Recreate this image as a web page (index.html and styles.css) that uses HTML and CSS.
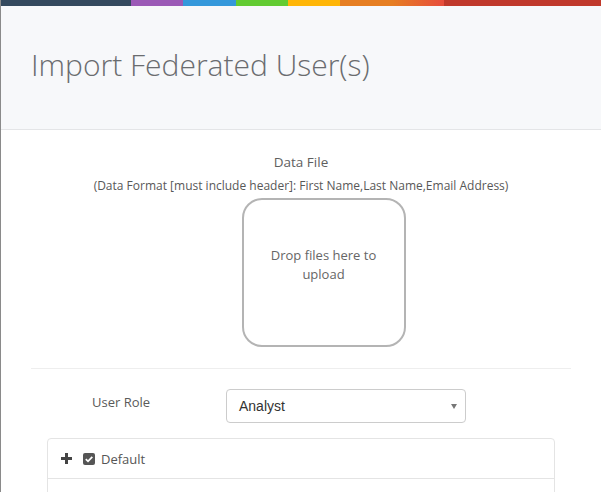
FILE: index.html
```html
<!DOCTYPE html>
<html>
<head>
<meta charset="utf-8">
<link rel="stylesheet" href="styles.css">
</head>
<body>
<div class="modal">
  <div class="stripe">
    <span class="s s1"></span><span class="s s2"></span><span class="s s3"></span><span class="s s4"></span><span class="s s5"></span><span class="s s6"></span><span class="s s7"></span>
  </div>
  <div class="header">
    <h1 class="title">Import Federated User(s)</h1>
  </div>
  <div class="body">
    <div class="field-label">Data File</div>
    <div class="format">(Data Format [must include header]: First Name,Last Name,Email Address)</div>
    <div class="drop-wrap">
      <div class="dropzone">Drop files here to upload</div>
    </div>
    <div class="divider"></div>
    <div class="role-row">
      <div class="role-label">User Role</div>
      <div class="select">
        <span class="select-value">Analyst</span>
        <span class="caret"></span>
      </div>
    </div>
    <div class="tree">
      <div class="tree-row">
        <svg class="plus" width="11" height="11" viewBox="0 0 11 11"><rect x="4" y="0" width="3" height="11" fill="#444"/><rect x="0" y="4" width="11" height="3" fill="#444"/></svg>
        <svg class="check" width="12" height="12" viewBox="0 0 12 12"><rect x="0" y="0" width="12" height="12" rx="2" fill="#555"/><path d="M2.8 6.2 L5 8.3 L9.3 3.8" fill="none" stroke="#fff" stroke-width="1.8"/></svg>
        <span class="tree-text">Default</span>
      </div>
      <div class="tree-row empty"></div>
    </div>
  </div>
</div>
</body>
</html>
```

FILE: styles.css
```css
html, body {
  margin: 0;
  padding: 0;
  background: #ffffff;
}
body {
  font-family: "Open Sans", "Liberation Sans", sans-serif;
  overflow: hidden;
}
.modal {
  width: 600px;
  height: 492px;
  border-left: 1px solid #8a8a8a;
  background: #ffffff;
  overflow: hidden;
}
.stripe {
  display: flex;
  height: 6px;
}
.s { display: block; height: 6px; }
.s1 { width: 130px; background: #34495e; }
.s2 { width: 52px; background: #9b59b6; }
.s3 { width: 53px; background: #3498db; }
.s4 { width: 52px; background: #62cb31; }
.s5 { width: 52px; background: #ffb606; }
.s6 { width: 104px; background: linear-gradient(to right, #e67e22 0%, #e67e22 50%, #e74c3c 100%); }
.s7 { flex: 1; background: #c0392b; }
.header {
  background: #f7f8fa;
  border-bottom: 1px solid #e4e5e7;
  padding: 39px 30px 44px 30px;
}
.title {
  margin: 0;
  font-weight: 300;
  font-size: 30px;
  line-height: 40px;
  color: #6a6c6f;
}
.body {
  padding: 23px 30px 0 30px;
}
.field-label {
  text-align: center;
  font-size: 13.5px;
  line-height: 18px;
  color: #5f5f5f;
}
.format {
  text-align: center;
  font-size: 12px;
  line-height: 17px;
  margin-top: 6px;
  color: #585858;
}
.drop-wrap {
  display: flex;
  justify-content: center;
  margin-top: 4px;
}
.dropzone {
  box-sizing: border-box;
  width: 164px;
  height: 149px;
  border: 2px solid #b4b4b4;
  border-radius: 20px;
  padding: 46px 16px 0 16px;
  text-align: center;
  font-size: 13px;
  line-height: 19px;
  color: #666;
  margin-left: 45px;
}
.divider {
  height: 1px;
  background: #eeeeee;
  margin-top: 21px;
}
.role-row {
  display: flex;
  align-items: center;
  margin-top: 20px;
}
.role-label {
  width: 195px;
  padding-left: 61px;
  box-sizing: border-box;
  font-size: 13px;
  color: #5a5a5a;
  margin-top: -9px;
}
.select {
  box-sizing: border-box;
  width: 240px;
  height: 34px;
  border: 1px solid #cccccc;
  border-radius: 4px;
  display: flex;
  align-items: center;
  justify-content: space-between;
  padding: 0 8px 0 12px;
}
.select-value {
  font-family: "Liberation Sans", Arial, sans-serif;
  font-size: 14px;
  color: #333;
}
.caret {
  width: 0;
  height: 0;
  border-left: 3px solid transparent;
  border-right: 3px solid transparent;
  border-top: 5px solid #777;
  margin-top: 1px;
}
.tree {
  margin: 15px 15px 0 16px;
  border: 1px solid #e4e4e4;
  border-radius: 4px;
  width: 508px;
  box-sizing: border-box;
}
.tree-row {
  height: 39px;
  display: flex;
  align-items: center;
  padding-left: 13px;
  border-bottom: 1px solid #e4e4e4;
}
.tree-row.empty {
  height: 40px;
  border-bottom: none;
}
.plus { margin-right: 11px; }
.check { margin-right: 6px; }
.tree-text {
  font-size: 13px;
  color: #555;
}
```
